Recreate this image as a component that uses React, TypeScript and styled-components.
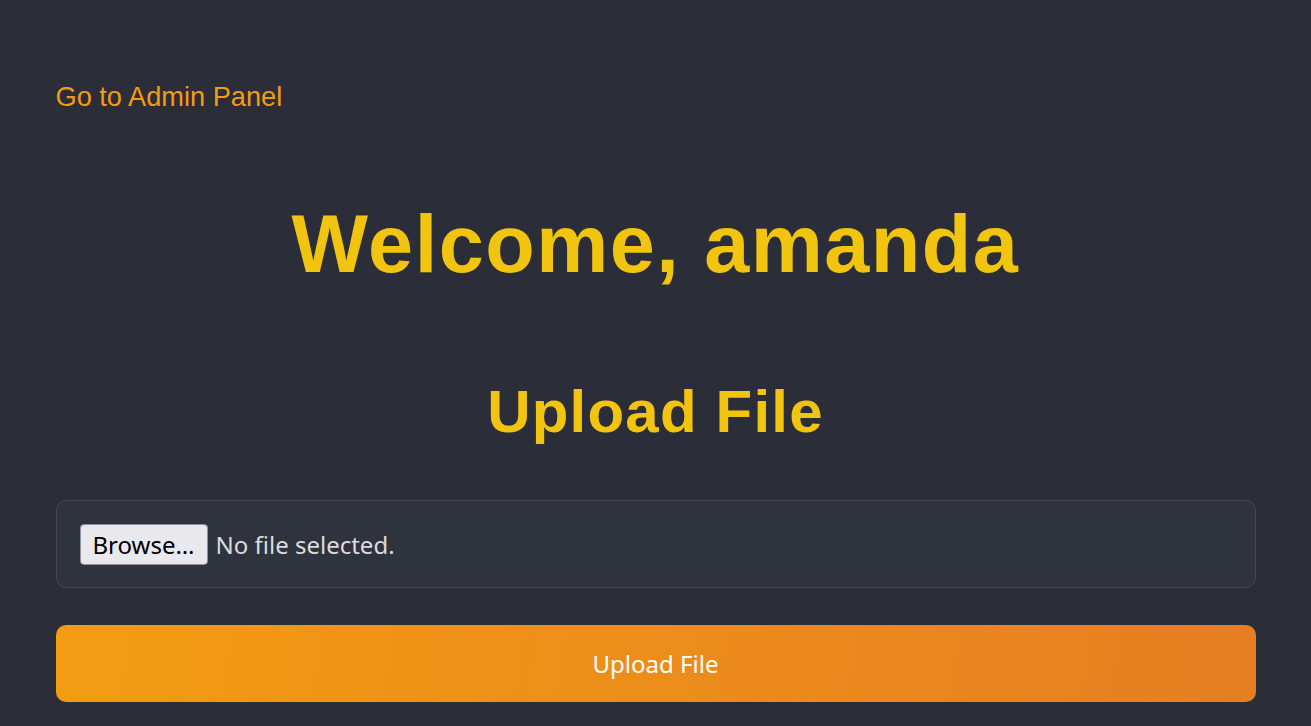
import React from "react";
import styled, { createGlobalStyle } from "styled-components";

const GlobalStyle = createGlobalStyle`
  html, body {
    margin: 0;
    padding: 0;
    background: #2b2d38;
  }
  body {
    font-family: "Liberation Sans", Arial, sans-serif;
  }
`;

const Page = styled.div`
  min-height: 726px;
  background: #2b2d38;
`;

const Container = styled.main`
  max-width: 1200px;
  margin: 0 auto;
  padding-top: 82px;
  display: flex;
  flex-direction: column;
`;

const AdminLink = styled.a`
  align-self: flex-start;
  color: #f39c12;
  font-family: "Liberation Sans", Arial, sans-serif;
  font-size: 27.2px;
  line-height: 30px;
  text-decoration: none;
`;

const Title = styled.h1`
  margin: 87px 0 0;
  text-align: center;
  color: #f1c40f;
  font-family: "Liberation Sans", Arial, sans-serif;
  font-weight: 700;
  font-size: 81px;
  letter-spacing: 1.5px;
  line-height: 90px;
`;

const SubTitle = styled.h2`
  margin: 89px 0 0;
  text-align: center;
  color: #f1c40f;
  font-family: "Liberation Sans", Arial, sans-serif;
  font-weight: 700;
  font-size: 60px;
  letter-spacing: 1.2px;
  line-height: 67px;
`;

const Form = styled.form`
  display: flex;
  flex-direction: column;
  margin-top: 55px;
  gap: 37px;
`;

const FileBox = styled.label`
  display: flex;
  align-items: center;
  gap: 8px;
  height: 88px;
  box-sizing: border-box;
  padding: 0 23px;
  background: #2f333d;
  border: 1px solid #454850;
  border-radius: 10px;
  cursor: pointer;
`;

const BrowseButton = styled.span`
  display: inline-flex;
  align-items: center;
  justify-content: center;
  box-sizing: border-box;
  width: 128px;
  height: 41px;
  background: #e9e9ed;
  border: 1px solid #8f8f9d;
  border-radius: 4px;
  color: #000;
  font-family: "Noto Sans", sans-serif;
  font-size: 24px;
`;

const FileStatus = styled.span`
  color: #dcdcdc;
  font-family: "Noto Sans", sans-serif;
  font-size: 24px;
`;

const HiddenInput = styled.input`
  display: none;
`;

const SubmitButton = styled.button`
  height: 77px;
  border: none;
  border-radius: 10px;
  background: linear-gradient(100deg, #f39c12 0%, #e67e22 100%);
  color: #ffffff;
  font-family: "Noto Sans", sans-serif;
  font-size: 24px;
  cursor: pointer;
`;

export default function App() {
  return (
    <Page>
      <GlobalStyle />
      <Container>
        <AdminLink href="#admin">Go to Admin Panel</AdminLink>
        <Title>Welcome, amanda</Title>
        <SubTitle>Upload File</SubTitle>
        <Form onSubmit={(e) => e.preventDefault()}>
          <FileBox>
            <HiddenInput type="file" />
            <BrowseButton>Browse…</BrowseButton>
            <FileStatus>No file selected.</FileStatus>
          </FileBox>
          <SubmitButton type="submit">Upload File</SubmitButton>
        </Form>
      </Container>
    </Page>
  );
}
